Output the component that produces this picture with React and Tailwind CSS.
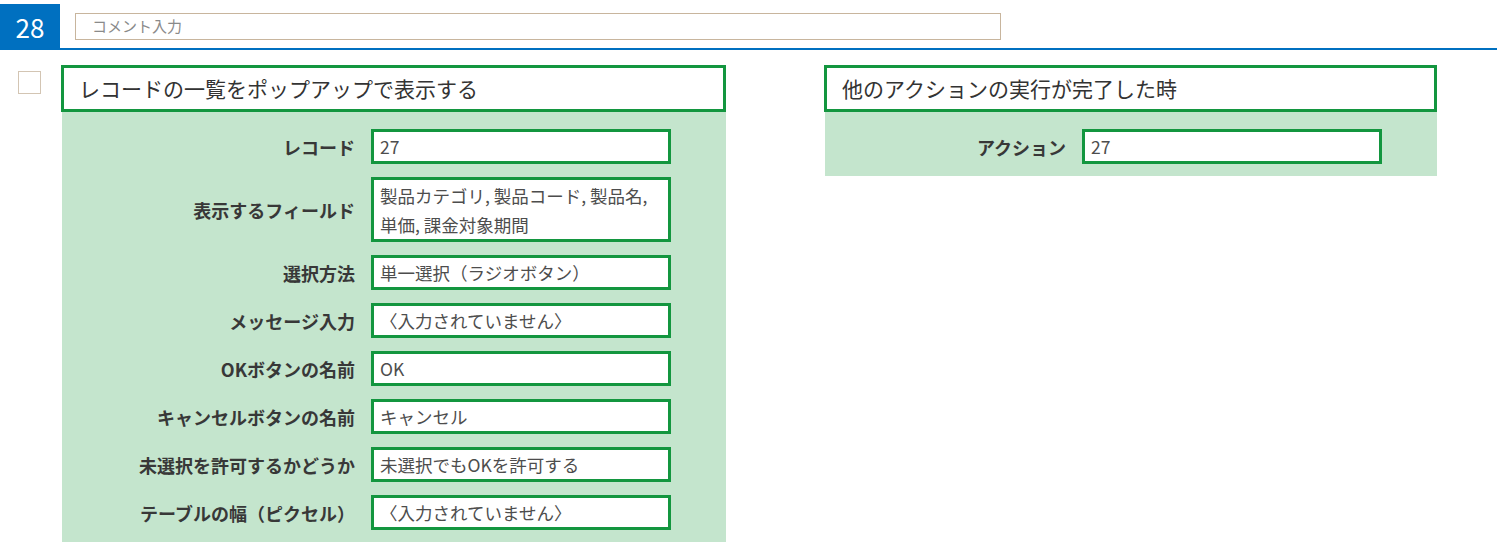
import React from "react";

const rows = [
  { label: "レコード", value: "27" },
  { label: "表示するフィールド", value: ["製品カテゴリ, 製品コード, 製品名,", "単価, 課金対象期間"] },
  { label: "選択方法", value: "単一選択（ラジオボタン）" },
  { label: "メッセージ入力", value: "〈入力されていません〉" },
  { label: "OKボタンの名前", value: "OK" },
  { label: "キャンセルボタンの名前", value: "キャンセル" },
  { label: "未選択を許可するかどうか", value: "未選択でもOKを許可する" },
  { label: "テーブルの幅（ピクセル）", value: "〈入力されていません〉" },
];

function Row({ label, value }) {
  const multi = Array.isArray(value);
  return (
    <div className="flex items-center">
      <div className="flex-1 pr-4 text-right text-[18px] font-bold text-[#383838] leading-none">{label}</div>
      <div
        className={
          "mr-[55px] flex w-[300px] items-center border-[3px] border-[#13963f] bg-white px-[6px] text-[17.5px] text-[#4d4d4d] " +
          (multi ? "h-[65px] leading-[29px]" : "h-[35px] leading-none")
        }
      >
        {multi ? (
          <div>
            {value[0]}
            <br />
            {value[1]}
          </div>
        ) : (
          value
        )}
      </div>
    </div>
  );
}

function Panel({ title, items, width, className }) {
  return (
    <div className={"flex flex-col " + width + " " + className}>
      <div className="flex h-[47px] items-center border-[3px] border-[#13963f] bg-white px-[15px] text-[21px] text-[#333]">
        {title}
      </div>
      <div className="ml-px flex flex-col gap-[13px] bg-[#c4e5cd] pt-[17px] pb-[12px]">
        {items.map((r, i) => (
          <Row key={i} {...r} />
        ))}
      </div>
    </div>
  );
}

export default function App() {
  return (
    <div className="h-[545px] w-[1497px] overflow-hidden bg-white font-['Noto_Sans_CJK_JP','Noto_Sans',sans-serif]">
      <div className="mt-1 flex h-[46px] border-b-2 border-[#0070c0]">
        <div className="flex h-[44px] w-[60px] items-center justify-center bg-[#0070c0] text-[26px] text-white">28</div>
        <div className="ml-[15px] mt-[9px] flex h-[27px] w-[926px] items-center border border-[#c8b59d] px-4 text-[15px] text-[#8a8a8a]">
          コメント入力
        </div>
      </div>
      <div className="mt-[15px] flex items-start">
        <div className="ml-[18px] mt-[6px] h-[23px] w-[23px] border border-[#d3c5b3] bg-white" />
        <Panel title="レコードの一覧をポップアップで表示する" items={rows} width="w-[665px]" className="ml-[20px]" />
        <Panel title="他のアクションの実行が完了した時" items={[{ label: "アクション", value: "27" }]} width="w-[613px]" className="ml-[98px]" />
      </div>
    </div>
  );
}
